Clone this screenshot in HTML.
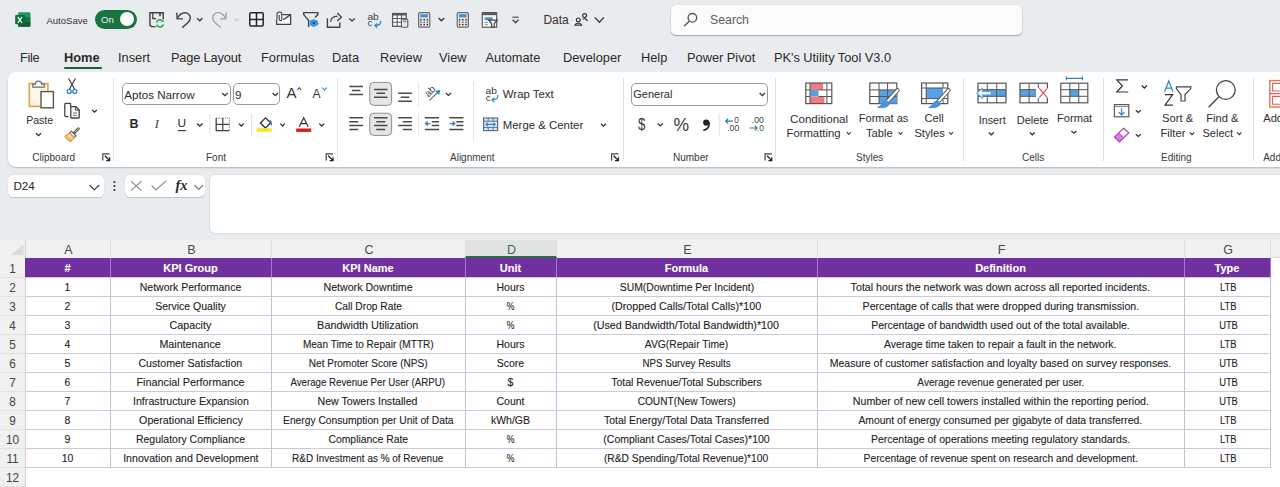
<!DOCTYPE html>
<html><head><meta charset="utf-8">
<style>
*{margin:0;padding:0;box-sizing:border-box}
html,body{width:1280px;height:487px;overflow:hidden;background:#e9ecef;font-family:"Liberation Sans", sans-serif;color:#242424;position:relative}
.a{position:absolute;white-space:nowrap}
svg{position:absolute;left:0;top:0}
.cell{font-size:10.5px;color:#222;text-align:center;overflow:hidden;-webkit-text-stroke:0.1px #222}
.hd{color:#fff;font-weight:bold;font-size:11px;-webkit-text-stroke:0.1px #fff}
.colh{top:240.5px;height:17px;line-height:18px;font-size:12.5px;text-align:center}
.rowh{left:-0.4px;width:25px;text-align:center;font-size:12.8px;color:#444;transform:scaleX(0.92)}
</style></head><body>
<div class="a" style="left:46.5px;top:15.71px;font-size:9.5px;line-height:9.5px;color:#333">AutoSave</div>
<div class="a" style="left:95px;top:10px;width:42px;height:19px;border-radius:10px;background:#19743f"></div>
<div class="a" style="left:101px;top:15.37px;font-size:9.6px;line-height:9.6px;color:#e6f4ea">On</div>
<div class="a" style="left:119.7px;top:12px;width:14.4px;height:14.4px;border-radius:50%;background:#fff"></div>
<div class="a" style="left:543.4px;top:14.34px;font-size:12px;line-height:12px;color:#303030">Data</div>
<div class="a" style="left:671px;top:4.5px;width:351px;height:30.5px;border-radius:5px;background:#fbfbfb;box-shadow:0 1px 1.5px rgba(0,0,0,.28),0 0 0 0.5px #dcdcdc"></div>
<div class="a" style="left:710px;top:14.09px;font-size:12.3px;line-height:12.3px;color:#5e5e5e">Search</div>
<div class="a" style="left:20px;top:52.16px;font-size:12.8px;line-height:12.8px;color:#2a2a2a;letter-spacing:-0.35px">File</div>
<div class="a" style="left:64px;top:52.16px;font-size:12.8px;line-height:12.8px;color:#2a2a2a;font-weight:bold;letter-spacing:0px">Home</div>
<div class="a" style="left:118px;top:52.16px;font-size:12.8px;line-height:12.8px;color:#2a2a2a;letter-spacing:0px">Insert</div>
<div class="a" style="left:170.9px;top:52.16px;font-size:12.8px;line-height:12.8px;color:#2a2a2a;letter-spacing:-0.15px">Page Layout</div>
<div class="a" style="left:261px;top:52.16px;font-size:12.8px;line-height:12.8px;color:#2a2a2a;letter-spacing:0px">Formulas</div>
<div class="a" style="left:332px;top:52.16px;font-size:12.8px;line-height:12.8px;color:#2a2a2a;letter-spacing:0px">Data</div>
<div class="a" style="left:380px;top:52.16px;font-size:12.8px;line-height:12.8px;color:#2a2a2a;letter-spacing:0px">Review</div>
<div class="a" style="left:439px;top:52.16px;font-size:12.8px;line-height:12.8px;color:#2a2a2a;letter-spacing:0px">View</div>
<div class="a" style="left:485.5px;top:52.16px;font-size:12.8px;line-height:12.8px;color:#2a2a2a;letter-spacing:0px">Automate</div>
<div class="a" style="left:563px;top:52.16px;font-size:12.8px;line-height:12.8px;color:#2a2a2a;letter-spacing:0px">Developer</div>
<div class="a" style="left:641px;top:52.16px;font-size:12.8px;line-height:12.8px;color:#2a2a2a;letter-spacing:0px">Help</div>
<div class="a" style="left:687px;top:52.16px;font-size:12.8px;line-height:12.8px;color:#2a2a2a;letter-spacing:0px">Power Pivot</div>
<div class="a" style="left:774px;top:52.16px;font-size:12.8px;line-height:12.8px;color:#2a2a2a;letter-spacing:-0.02px">PK's Utility Tool V3.0</div>
<div class="a" style="left:64.2px;top:66.8px;width:37.4px;height:2.6px;border-radius:1.3px;background:#1b6138"></div>
<div class="a" style="left:8px;top:72px;width:1290px;height:94.5px;background:#fff;border-radius:8px;box-shadow:0 1px 1.5px rgba(0,0,0,.22)"></div>
<div class="a" style="left:113px;top:78px;width:1px;height:83px;background:#e3e3e3"></div>
<div class="a" style="left:336.5px;top:78px;width:1px;height:83px;background:#e3e3e3"></div>
<div class="a" style="left:622.5px;top:78px;width:1px;height:83px;background:#e3e3e3"></div>
<div class="a" style="left:775.3px;top:78px;width:1px;height:83px;background:#e3e3e3"></div>
<div class="a" style="left:963px;top:78px;width:1px;height:83px;background:#e3e3e3"></div>
<div class="a" style="left:1102.5px;top:78px;width:1px;height:83px;background:#e3e3e3"></div>
<div class="a" style="left:1252.7px;top:78px;width:1px;height:83px;background:#e3e3e3"></div>
<div class="a" style="left:32.3px;top:152.73px;font-size:10px;line-height:10px;color:#3a3a3a">Clipboard</div>
<div class="a" style="left:206px;top:152.73px;font-size:10px;line-height:10px;color:#3a3a3a">Font</div>
<div class="a" style="left:450px;top:152.73px;font-size:10px;line-height:10px;color:#3a3a3a">Alignment</div>
<div class="a" style="left:673px;top:152.73px;font-size:10px;line-height:10px;color:#3a3a3a">Number</div>
<div class="a" style="left:856px;top:152.73px;font-size:10px;line-height:10px;color:#3a3a3a">Styles</div>
<div class="a" style="left:1022px;top:152.73px;font-size:10px;line-height:10px;color:#3a3a3a">Cells</div>
<div class="a" style="left:1161px;top:152.73px;font-size:10px;line-height:10px;color:#3a3a3a">Editing</div>
<div class="a" style="left:1263.2px;top:152.73px;font-size:10px;line-height:10px;color:#3a3a3a">Add-ins</div>
<div class="a" style="left:26.2px;top:115.11px;font-size:10.5px;line-height:10.5px;color:#2e2e2e">Paste</div>
<div class="a" style="left:121.5px;top:82.9px;width:109.2px;height:22.3px;border:1px solid #9a9a9a;border-radius:5px;background:#fff"></div>
<div class="a" style="left:124.3px;top:88.88px;font-size:11.6px;line-height:11.6px;color:#2b2b2b">Aptos Narrow</div>
<div class="a" style="left:232.5px;top:82.9px;width:47.8px;height:22.3px;border:1px solid #9a9a9a;border-radius:5px;background:#fff"></div>
<div class="a" style="left:235px;top:88.88px;font-size:11.6px;line-height:11.6px;color:#2b2b2b">9</div>
<div class="a" style="left:129.4px;top:117.62px;font-size:12.5px;line-height:12.5px;color:#2b2b2b;font-weight:bold">B</div>
<div class="a" style="left:154.8px;top:117.62px;font-size:12.5px;line-height:12.5px;color:#3a3a3a;font-style:italic;font-family:'Liberation Serif', serif">I</div>
<div class="a" style="left:177.6px;top:118.21px;font-size:11.8px;line-height:11.8px;color:#2b2b2b">U</div>
<div class="a" style="left:286.5px;top:85.30px;font-size:15px;line-height:15px;color:#333">A</div>
<div class="a" style="left:312.5px;top:87.84px;font-size:12px;line-height:12px;color:#333">A</div>
<div class="a" style="left:502.8px;top:89.05px;font-size:11.4px;line-height:11.4px;color:#2b2b2b">Wrap Text</div>
<div class="a" style="left:502.8px;top:119.65px;font-size:11.4px;line-height:11.4px;color:#2b2b2b">Merge &amp; Center</div>
<div class="a" style="left:631px;top:82.5px;width:137px;height:23px;border:1px solid #9a9a9a;border-radius:5px;background:#fff"></div>
<div class="a" style="left:633.3px;top:89.39px;font-size:11px;line-height:11px;color:#2b2b2b">General</div>
<div class="a" style="left:637.6px;top:116.01px;font-size:17px;line-height:17px;color:#3a3a3a;transform:scaleX(0.78);transform-origin:left">$</div>
<div class="a" style="left:673.5px;top:117.19px;font-size:17.5px;line-height:17.5px;color:#3a3a3a">%</div>
<div class="a" style="left:790.1px;top:113.18px;font-size:11.6px;line-height:11.6px;color:#2e2e2e">Conditional</div>
<div class="a" style="left:786.5px;top:127.53px;font-size:11.3px;line-height:11.3px;color:#2e2e2e">Formatting</div>
<div class="a" style="left:858.8px;top:113.29px;font-size:11px;line-height:11px;color:#2e2e2e">Format as</div>
<div class="a" style="left:866px;top:127.62px;font-size:11.2px;line-height:11.2px;color:#2e2e2e">Table</div>
<div class="a" style="left:924.5px;top:113.12px;font-size:11.2px;line-height:11.2px;color:#2e2e2e">Cell</div>
<div class="a" style="left:914.4px;top:127.62px;font-size:11.2px;line-height:11.2px;color:#2e2e2e">Styles</div>
<div class="a" style="left:978.7px;top:115.16px;font-size:10.8px;line-height:10.8px;color:#2e2e2e">Insert</div>
<div class="a" style="left:1016.7px;top:114.90px;font-size:11.1px;line-height:11.1px;color:#2e2e2e">Delete</div>
<div class="a" style="left:1057px;top:113.10px;font-size:11.1px;line-height:11.1px;color:#2e2e2e">Format</div>
<div class="a" style="left:1162px;top:112.72px;font-size:11.2px;line-height:11.2px;color:#2e2e2e">Sort &amp;</div>
<div class="a" style="left:1160.5px;top:127.72px;font-size:11.2px;line-height:11.2px;color:#2e2e2e">Filter</div>
<div class="a" style="left:1206.2px;top:112.72px;font-size:11.2px;line-height:11.2px;color:#2e2e2e">Find &amp;</div>
<div class="a" style="left:1202.5px;top:127.89px;font-size:11px;line-height:11px;color:#2e2e2e">Select</div>
<div class="a" style="left:1263.2px;top:112.72px;font-size:11.2px;line-height:11.2px;color:#2e2e2e">Add-ins</div>
<div class="a" style="left:7.7px;top:174.5px;width:96.3px;height:22px;background:#fff;border-radius:5px;box-shadow:0 0.5px 1px rgba(0,0,0,.18)"></div>
<div class="a" style="left:13.4px;top:180.40px;font-size:11.7px;line-height:11.7px;color:#262626">D24</div>
<div class="a" style="left:124.6px;top:174.5px;width:80.4px;height:22px;background:#fff;border-radius:5px;box-shadow:0 0.5px 1px rgba(0,0,0,.18)"></div>
<div class="a" style="left:210px;top:174.5px;width:1090px;height:58.8px;background:#fff;border-radius:5px;box-shadow:0 0 0 0.6px rgba(0,0,0,.1)"></div>
<div class="a" style="left:175.5px;top:178.23px;font-size:14.5px;line-height:14.5px;color:#2a2a2a;font-weight:bold;font-style:italic;font-family:'Liberation Serif', serif">fx</div>
<div class="a" style="left:0px;top:240px;width:1280px;height:247px;background:#fff"></div>
<div class="a" style="left:0px;top:240px;width:1280px;height:18px;background:#f0f0f0"></div>
<div class="a" style="left:25px;top:257px;width:1245px;height:1px;background:#f3ecf9"></div>
<div class="a" style="left:1270px;top:257px;width:10px;height:1px;background:#d8d8d8"></div>
<div class="a" style="left:0px;top:240px;width:25px;height:247px;background:#f0f0f0"></div>
<div class="a" style="left:466px;top:240px;width:90px;height:17px;background:#e1e3e3"></div>
<div class="a" style="left:465px;top:256px;width:92px;height:2px;background:#2f6b4a"></div>
<div class="a" style="left:110px;top:240px;width:1px;height:17px;background:#dedede"></div>
<div class="a" style="left:271px;top:240px;width:1px;height:17px;background:#dedede"></div>
<div class="a" style="left:465px;top:240px;width:1px;height:17px;background:#dedede"></div>
<div class="a" style="left:556px;top:240px;width:1px;height:17px;background:#dedede"></div>
<div class="a" style="left:817px;top:240px;width:1px;height:17px;background:#dedede"></div>
<div class="a" style="left:1184px;top:240px;width:1px;height:17px;background:#dedede"></div>
<div class="a" style="left:1270px;top:240px;width:1px;height:17px;background:#dedede"></div>
<div class="a" style="left:25px;top:240px;width:1px;height:247px;background:#d2d2d2"></div>
<div class="a colh" style="left:26px;width:85px;color:#4a4a4a">A</div>
<div class="a colh" style="left:111px;width:161px;color:#4a4a4a">B</div>
<div class="a colh" style="left:272px;width:194px;color:#4a4a4a">C</div>
<div class="a colh" style="left:466px;width:91px;color:#3d6a4e">D</div>
<div class="a colh" style="left:557px;width:261px;color:#4a4a4a">E</div>
<div class="a colh" style="left:818px;width:367px;color:#4a4a4a">F</div>
<div class="a colh" style="left:1185px;width:86px;color:#4a4a4a">G</div>
<div class="a rowh" style="top:259px;height:19px;line-height:19px">1</div>
<div class="a" style="left:0px;top:277px;width:25px;height:1px;background:#e2e2e2"></div>
<div class="a rowh" style="top:279px;height:18px;line-height:18px">2</div>
<div class="a" style="left:0px;top:296px;width:25px;height:1px;background:#e2e2e2"></div>
<div class="a rowh" style="top:298px;height:18px;line-height:18px">3</div>
<div class="a" style="left:0px;top:315px;width:25px;height:1px;background:#e2e2e2"></div>
<div class="a rowh" style="top:317px;height:18px;line-height:18px">4</div>
<div class="a" style="left:0px;top:334px;width:25px;height:1px;background:#e2e2e2"></div>
<div class="a rowh" style="top:336px;height:18px;line-height:18px">5</div>
<div class="a" style="left:0px;top:353px;width:25px;height:1px;background:#e2e2e2"></div>
<div class="a rowh" style="top:355px;height:18px;line-height:18px">6</div>
<div class="a" style="left:0px;top:372px;width:25px;height:1px;background:#e2e2e2"></div>
<div class="a rowh" style="top:374px;height:18px;line-height:18px">7</div>
<div class="a" style="left:0px;top:391px;width:25px;height:1px;background:#e2e2e2"></div>
<div class="a rowh" style="top:393px;height:18px;line-height:18px">8</div>
<div class="a" style="left:0px;top:410px;width:25px;height:1px;background:#e2e2e2"></div>
<div class="a rowh" style="top:412px;height:18px;line-height:18px">9</div>
<div class="a" style="left:0px;top:429px;width:25px;height:1px;background:#e2e2e2"></div>
<div class="a rowh" style="top:431px;height:18px;line-height:18px">10</div>
<div class="a" style="left:0px;top:448px;width:25px;height:1px;background:#e2e2e2"></div>
<div class="a rowh" style="top:450px;height:18px;line-height:18px">11</div>
<div class="a" style="left:0px;top:467px;width:25px;height:1px;background:#e2e2e2"></div>
<div class="a rowh" style="top:469px;height:18px;line-height:18px">12</div>
<div class="a" style="left:0px;top:486px;width:25px;height:1px;background:#e2e2e2"></div>
<div class="a" style="left:25px;top:258px;width:1245px;height:19px;background:#7030a0"></div>
<div class="a" style="left:25px;top:277px;width:1246px;height:1px;background:#ccc9da"></div>
<div class="a" style="left:25px;top:296px;width:1246px;height:1px;background:#ccc9da"></div>
<div class="a" style="left:25px;top:315px;width:1246px;height:1px;background:#ccc9da"></div>
<div class="a" style="left:25px;top:334px;width:1246px;height:1px;background:#ccc9da"></div>
<div class="a" style="left:25px;top:353px;width:1246px;height:1px;background:#ccc9da"></div>
<div class="a" style="left:25px;top:372px;width:1246px;height:1px;background:#ccc9da"></div>
<div class="a" style="left:25px;top:391px;width:1246px;height:1px;background:#ccc9da"></div>
<div class="a" style="left:25px;top:410px;width:1246px;height:1px;background:#ccc9da"></div>
<div class="a" style="left:25px;top:429px;width:1246px;height:1px;background:#ccc9da"></div>
<div class="a" style="left:25px;top:448px;width:1246px;height:1px;background:#ccc9da"></div>
<div class="a" style="left:25px;top:467px;width:1246px;height:1px;background:#ccc9da"></div>
<div class="a" style="left:110px;top:258px;width:1px;height:19px;background:#a57ad6"></div>
<div class="a" style="left:110px;top:277px;width:1px;height:191px;background:#c4c0d9"></div>
<div class="a" style="left:271px;top:258px;width:1px;height:19px;background:#a57ad6"></div>
<div class="a" style="left:271px;top:277px;width:1px;height:191px;background:#c4c0d9"></div>
<div class="a" style="left:465px;top:258px;width:1px;height:19px;background:#a57ad6"></div>
<div class="a" style="left:465px;top:277px;width:1px;height:191px;background:#c4c0d9"></div>
<div class="a" style="left:556px;top:258px;width:1px;height:19px;background:#a57ad6"></div>
<div class="a" style="left:556px;top:277px;width:1px;height:191px;background:#c4c0d9"></div>
<div class="a" style="left:817px;top:258px;width:1px;height:19px;background:#a57ad6"></div>
<div class="a" style="left:817px;top:277px;width:1px;height:191px;background:#c4c0d9"></div>
<div class="a" style="left:1184px;top:258px;width:1px;height:19px;background:#a57ad6"></div>
<div class="a" style="left:1184px;top:277px;width:1px;height:191px;background:#c4c0d9"></div>
<div class="a" style="left:1270px;top:258px;width:1px;height:19px;background:#a57ad6"></div>
<div class="a" style="left:1270px;top:277px;width:1px;height:191px;background:#c4c0d9"></div>
<div class="a cell hd" style="left:25px;top:258.7px;width:85px;height:19px;line-height:19px">#</div>
<div class="a cell hd" style="left:110px;top:258.7px;width:161px;height:19px;line-height:19px">KPI Group</div>
<div class="a cell hd" style="left:271px;top:258.7px;width:194px;height:19px;line-height:19px">KPI Name</div>
<div class="a cell hd" style="left:465px;top:258.7px;width:91px;height:19px;line-height:19px">Unit</div>
<div class="a cell hd" style="left:556px;top:258.7px;width:261px;height:19px;line-height:19px">Formula</div>
<div class="a cell hd" style="left:817px;top:258.7px;width:367px;height:19px;line-height:19px">Definition</div>
<div class="a cell hd" style="left:1184px;top:258.7px;width:86px;height:19px;line-height:19px">Type</div>
<div class="a cell" style="left:25px;top:277.5px;width:85px;height:18px;line-height:18px">1</div>
<div class="a cell" style="left:110px;top:277.5px;width:161px;height:18px;line-height:18px">Network Performance</div>
<div class="a cell" style="left:271px;top:277.5px;width:194px;height:18px;line-height:18px"><span style="display:inline-block;transform:scaleX(1.0113)">Network Downtime</span></div>
<div class="a cell" style="left:465px;top:277.5px;width:91px;height:18px;line-height:18px">Hours</div>
<div class="a cell" style="left:556px;top:277.5px;width:261px;height:18px;line-height:18px"><span style="display:inline-block;transform:scaleX(0.9884)">SUM(Downtime Per Incident)</span></div>
<div class="a cell" style="left:817px;top:277.5px;width:367px;height:18px;line-height:18px"><span style="display:inline-block;transform:scaleX(1.0162)">Total hours the network was down across all reported incidents.</span></div>
<div class="a cell" style="left:1185px;top:277.5px;width:86px;height:18px;line-height:18px"><span style="display:inline-block;transform:scaleX(0.89)">LTB</span></div>
<div class="a cell" style="left:25px;top:296.5px;width:85px;height:18px;line-height:18px">2</div>
<div class="a cell" style="left:110px;top:296.5px;width:161px;height:18px;line-height:18px">Service Quality</div>
<div class="a cell" style="left:271px;top:296.5px;width:194px;height:18px;line-height:18px"><span style="display:inline-block;transform:scaleX(0.9739)">Call Drop Rate</span></div>
<div class="a cell" style="left:465px;top:296.5px;width:91px;height:18px;line-height:18px"><span style="display:inline-block;transform:scaleX(0.82)">%</span></div>
<div class="a cell" style="left:556px;top:296.5px;width:261px;height:18px;line-height:18px"><span style="display:inline-block;transform:scaleX(1.0221)">(Dropped Calls/Total Calls)*100</span></div>
<div class="a cell" style="left:817px;top:296.5px;width:367px;height:18px;line-height:18px"><span style="display:inline-block;transform:scaleX(1.0105)">Percentage of calls that were dropped during transmission.</span></div>
<div class="a cell" style="left:1185px;top:296.5px;width:86px;height:18px;line-height:18px"><span style="display:inline-block;transform:scaleX(0.89)">LTB</span></div>
<div class="a cell" style="left:25px;top:315.5px;width:85px;height:18px;line-height:18px">3</div>
<div class="a cell" style="left:110px;top:315.5px;width:161px;height:18px;line-height:18px"><span style="display:inline-block;transform:scaleX(1.0235)">Capacity</span></div>
<div class="a cell" style="left:271px;top:315.5px;width:194px;height:18px;line-height:18px"><span style="display:inline-block;transform:scaleX(1.0386)">Bandwidth Utilization</span></div>
<div class="a cell" style="left:465px;top:315.5px;width:91px;height:18px;line-height:18px"><span style="display:inline-block;transform:scaleX(0.82)">%</span></div>
<div class="a cell" style="left:556px;top:315.5px;width:261px;height:18px;line-height:18px"><span style="display:inline-block;transform:scaleX(1.0204)">(Used Bandwidth/Total Bandwidth)*100</span></div>
<div class="a cell" style="left:817px;top:315.5px;width:367px;height:18px;line-height:18px">Percentage of bandwidth used out of the total available.</div>
<div class="a cell" style="left:1185px;top:315.5px;width:86px;height:18px;line-height:18px"><span style="display:inline-block;transform:scaleX(0.89)">UTB</span></div>
<div class="a cell" style="left:25px;top:334.5px;width:85px;height:18px;line-height:18px">4</div>
<div class="a cell" style="left:110px;top:334.5px;width:161px;height:18px;line-height:18px"><span style="display:inline-block;transform:scaleX(1.0198)">Maintenance</span></div>
<div class="a cell" style="left:271px;top:334.5px;width:194px;height:18px;line-height:18px"><span style="display:inline-block;transform:scaleX(0.9578)">Mean Time to Repair (MTTR)</span></div>
<div class="a cell" style="left:465px;top:334.5px;width:91px;height:18px;line-height:18px">Hours</div>
<div class="a cell" style="left:556px;top:334.5px;width:261px;height:18px;line-height:18px"><span style="display:inline-block;transform:scaleX(0.981)">AVG(Repair Time)</span></div>
<div class="a cell" style="left:817px;top:334.5px;width:367px;height:18px;line-height:18px"><span style="display:inline-block;transform:scaleX(0.9917)">Average time taken to repair a fault in the network.</span></div>
<div class="a cell" style="left:1185px;top:334.5px;width:86px;height:18px;line-height:18px"><span style="display:inline-block;transform:scaleX(0.89)">LTB</span></div>
<div class="a cell" style="left:25px;top:353.5px;width:85px;height:18px;line-height:18px">5</div>
<div class="a cell" style="left:110px;top:353.5px;width:161px;height:18px;line-height:18px"><span style="display:inline-block;transform:scaleX(1.0106)">Customer Satisfaction</span></div>
<div class="a cell" style="left:271px;top:353.5px;width:194px;height:18px;line-height:18px"><span style="display:inline-block;transform:scaleX(0.9547)">Net Promoter Score (NPS)</span></div>
<div class="a cell" style="left:465px;top:353.5px;width:91px;height:18px;line-height:18px">Score</div>
<div class="a cell" style="left:556px;top:353.5px;width:261px;height:18px;line-height:18px"><span style="display:inline-block;transform:scaleX(0.9255)">NPS Survey Results</span></div>
<div class="a cell" style="left:817px;top:353.5px;width:367px;height:18px;line-height:18px">Measure of customer satisfaction and loyalty based on survey responses.</div>
<div class="a cell" style="left:1185px;top:353.5px;width:86px;height:18px;line-height:18px"><span style="display:inline-block;transform:scaleX(0.89)">UTB</span></div>
<div class="a cell" style="left:25px;top:372.5px;width:85px;height:18px;line-height:18px">6</div>
<div class="a cell" style="left:110px;top:372.5px;width:161px;height:18px;line-height:18px"><span style="display:inline-block;transform:scaleX(1.0302)">Financial Performance</span></div>
<div class="a cell" style="left:271px;top:372.5px;width:194px;height:18px;line-height:18px"><span style="display:inline-block;transform:scaleX(0.9237)">Average Revenue Per User (ARPU)</span></div>
<div class="a cell" style="left:465px;top:372.5px;width:91px;height:18px;line-height:18px">$</div>
<div class="a cell" style="left:556px;top:372.5px;width:261px;height:18px;line-height:18px">Total Revenue/Total Subscribers</div>
<div class="a cell" style="left:817px;top:372.5px;width:367px;height:18px;line-height:18px"><span style="display:inline-block;transform:scaleX(0.9615)">Average revenue generated per user.</span></div>
<div class="a cell" style="left:1185px;top:372.5px;width:86px;height:18px;line-height:18px"><span style="display:inline-block;transform:scaleX(0.89)">UTB</span></div>
<div class="a cell" style="left:25px;top:391.5px;width:85px;height:18px;line-height:18px">7</div>
<div class="a cell" style="left:110px;top:391.5px;width:161px;height:18px;line-height:18px"><span style="display:inline-block;transform:scaleX(1.0185)">Infrastructure Expansion</span></div>
<div class="a cell" style="left:271px;top:391.5px;width:194px;height:18px;line-height:18px"><span style="display:inline-block;transform:scaleX(1.0099)">New Towers Installed</span></div>
<div class="a cell" style="left:465px;top:391.5px;width:91px;height:18px;line-height:18px">Count</div>
<div class="a cell" style="left:556px;top:391.5px;width:261px;height:18px;line-height:18px"><span style="display:inline-block;transform:scaleX(0.9679)">COUNT(New Towers)</span></div>
<div class="a cell" style="left:817px;top:391.5px;width:367px;height:18px;line-height:18px"><span style="display:inline-block;transform:scaleX(1.0147)">Number of new cell towers installed within the reporting period.</span></div>
<div class="a cell" style="left:1185px;top:391.5px;width:86px;height:18px;line-height:18px"><span style="display:inline-block;transform:scaleX(0.89)">UTB</span></div>
<div class="a cell" style="left:25px;top:410.5px;width:85px;height:18px;line-height:18px">8</div>
<div class="a cell" style="left:110px;top:410.5px;width:161px;height:18px;line-height:18px"><span style="display:inline-block;transform:scaleX(1.0173)">Operational Efficiency</span></div>
<div class="a cell" style="left:271px;top:410.5px;width:194px;height:18px;line-height:18px"><span style="display:inline-block;transform:scaleX(0.9763)">Energy Consumption per Unit of Data</span></div>
<div class="a cell" style="left:465px;top:410.5px;width:91px;height:18px;line-height:18px">kWh/GB</div>
<div class="a cell" style="left:556px;top:410.5px;width:261px;height:18px;line-height:18px">Total Energy/Total Data Transferred</div>
<div class="a cell" style="left:817px;top:410.5px;width:367px;height:18px;line-height:18px"><span style="display:inline-block;transform:scaleX(0.9902)">Amount of energy consumed per gigabyte of data transferred.</span></div>
<div class="a cell" style="left:1185px;top:410.5px;width:86px;height:18px;line-height:18px"><span style="display:inline-block;transform:scaleX(0.89)">LTB</span></div>
<div class="a cell" style="left:25px;top:429.5px;width:85px;height:18px;line-height:18px">9</div>
<div class="a cell" style="left:110px;top:429.5px;width:161px;height:18px;line-height:18px">Regulatory Compliance</div>
<div class="a cell" style="left:271px;top:429.5px;width:194px;height:18px;line-height:18px"><span style="display:inline-block;transform:scaleX(0.9894)">Compliance Rate</span></div>
<div class="a cell" style="left:465px;top:429.5px;width:91px;height:18px;line-height:18px"><span style="display:inline-block;transform:scaleX(0.82)">%</span></div>
<div class="a cell" style="left:556px;top:429.5px;width:261px;height:18px;line-height:18px">(Compliant Cases/Total Cases)*100</div>
<div class="a cell" style="left:817px;top:429.5px;width:367px;height:18px;line-height:18px">Percentage of operations meeting regulatory standards.</div>
<div class="a cell" style="left:1185px;top:429.5px;width:86px;height:18px;line-height:18px"><span style="display:inline-block;transform:scaleX(0.89)">LTB</span></div>
<div class="a cell" style="left:25px;top:448.5px;width:85px;height:18px;line-height:18px">10</div>
<div class="a cell" style="left:110px;top:448.5px;width:161px;height:18px;line-height:18px"><span style="display:inline-block;transform:scaleX(1.0129)">Innovation and Development</span></div>
<div class="a cell" style="left:271px;top:448.5px;width:194px;height:18px;line-height:18px"><span style="display:inline-block;transform:scaleX(0.9487)">R&amp;D Investment as % of Revenue</span></div>
<div class="a cell" style="left:465px;top:448.5px;width:91px;height:18px;line-height:18px"><span style="display:inline-block;transform:scaleX(0.82)">%</span></div>
<div class="a cell" style="left:556px;top:448.5px;width:261px;height:18px;line-height:18px"><span style="display:inline-block;transform:scaleX(0.9772)">(R&amp;D Spending/Total Revenue)*100</span></div>
<div class="a cell" style="left:817px;top:448.5px;width:367px;height:18px;line-height:18px"><span style="display:inline-block;transform:scaleX(0.982)">Percentage of revenue spent on research and development.</span></div>
<div class="a cell" style="left:1185px;top:448.5px;width:86px;height:18px;line-height:18px"><span style="display:inline-block;transform:scaleX(0.89)">LTB</span></div>
<svg width="1280" height="487" viewBox="0 0 1280 487"><rect x="18.1" y="12.2" width="12.3" height="14.5" rx="1.2" fill="#1d9a5e"/><rect x="18.1" y="17" width="12.3" height="4.8" fill="#127a44"/><path d="M18.1,21.8 H30.4 V25.5 A1.2,1.2 0 0 1 29.2,26.7 H19.3 A1.2,1.2 0 0 1 18.1,25.5 Z" fill="#175c36"/><rect x="15.2" y="14.9" width="9.6" height="9.4" rx="0.9" fill="#0f6b39"/><path d="M17.7,17 L22,22.8 M22,17 L17.7,22.8" stroke="#d4f5e0" stroke-width="1.3"/><path d="M155.5,26.6 H151.4 L149.9,25.1 V12.8 H163.2 V19.2" fill="none" stroke="#424242" stroke-width="1.4"/><path d="M152.8,12.8 V18.6 H156.2" fill="none" stroke="#424242" stroke-width="1.3"/><path d="M160,12.8 V16.3" fill="none" stroke="#424242" stroke-width="1.6"/><path d="M156.6,22.6 A3.4,3.4 0 0 1 162.8,21.2" fill="none" stroke="#2f9e58" stroke-width="1.5"/><path d="M163.3,24.3 A3.4,3.4 0 0 1 157.2,25.6" fill="none" stroke="#2f9e58" stroke-width="1.5"/><path d="M163.6,19.6 V22 H161.2 Z M156.3,27.2 V24.8 H158.7 Z" fill="#2f9e58"/><path d="M177.3,18.6 C179.5,14.2 182.5,12.7 184.8,12.7 C188,12.7 190.3,15.2 190.3,17.8 C190.3,19.8 189.4,21.2 187.8,22.8 L182.3,27.6" fill="none" stroke="#424242" stroke-width="1.4"/><path d="M176.8,12.6 L177.2,18.9 L183,18.9" fill="none" stroke="#424242" stroke-width="1.4"/><path d="M197.2,18.2 L199.8,20.8 L202.4,18.2" fill="none" stroke="#333" stroke-width="1.3"/><path d="M225.7,18.6 C223.5,14.2 220.5,12.7 218.2,12.7 C215,12.7 212.7,15.2 212.7,17.8 C212.7,19.8 213.6,21.2 215.2,22.8 L220.7,27.6" fill="none" stroke="#9e9e9e" stroke-width="1.3"/><path d="M226.2,12.6 L225.8,18.9 L220,18.9" fill="none" stroke="#9e9e9e" stroke-width="1.3"/><path d="M234.2,18.8 L236.5,20.8 L238.8,18.8" fill="none" stroke="#b0b0b0" stroke-width="1"/><rect x="249.8" y="12.8" width="13.4" height="13.2" rx="1" fill="#fff" fill-opacity=".4" stroke="#262626" stroke-width="1.5"/><path d="M256.5,12.8 V26 M249.8,19.4 H263.2" stroke="#262626" stroke-width="1.5"/><path d="M282.4,14.6 H290.6 V24.4 H276.7 V19.6" fill="#fbfbfb" stroke="#424242" stroke-width="1.3"/><path d="M283.2,19.8 L290.2,14.9" fill="none" stroke="#424242" stroke-width="1.3"/><path d="M277,19.6 V14.4 A2.4,2.4 0 0 1 281.8,14.4 V19.2 A1.3,1.3 0 0 1 279.2,19.2 V15" fill="none" stroke="#424242" stroke-width="1.1"/><path d="M308.6,27 V20.2 L303.7,14.6 V12.6 H317.8 V14.6 L315,17.6" fill="none" stroke="#424242" stroke-width="1.4"/><path d="M313.75,18.9 L315.8,20.1 L317.8,20.6 L317.8,22.9 L319,23 L317.8,25.3 L315.8,25.9 L313.75,27.1 L311.7,25.9 L309.7,25.3 L309.7,20.6 L311.7,20.1 Z" fill="#3a96e0" transform="translate(0,0)"/><circle cx="313.75" cy="23" r="3.2" fill="#3a96e0"/><circle cx="313.75" cy="23" r="1.2" fill="#1a4f80"/><path d="M327.4,18.2 V27.2 H339.8 V22.4" fill="none" stroke="#424242" stroke-width="1.4"/><path d="M330.6,21.6 C331,18 333.6,16.4 337.6,16.2" fill="none" stroke="#424242" stroke-width="1.3"/><path d="M337.4,13 L341.4,17.2 L337.4,21" fill="none" stroke="#424242" stroke-width="1.3"/><path d="M349.3,18.6 L352.05,21 L354.8,18.6" fill="none" stroke="#333" stroke-width="1.3"/><text x="367.4" y="19.6" font-family="Liberation Sans" font-size="9.8" fill="#424242" textLength="11.4" lengthAdjust="spacingAndGlyphs">ab</text><text x="367.6" y="26.4" font-family="Liberation Sans" font-size="9.8" fill="#424242">c</text><path d="M380.4,20.8 C381.4,24 379.2,25.6 375,25.6" fill="none" stroke="#2b8ce0" stroke-width="1.4"/><path d="M377.2,23.4 L374.8,25.6 L377.2,27.8" fill="none" stroke="#2b8ce0" stroke-width="1.3"/><rect x="392.6" y="13.5" width="13.6" height="12.8" fill="#fff" stroke="#585858" stroke-width="1.3"/><rect x="392.6" y="13.5" width="13.6" height="2" fill="#585858"/><path d="M392.6,18.5 H406 M392.6,22.2 H401 M397.2,13.5 V26.3 M401.6,13.5 V19" stroke="#585858" stroke-width="1.1"/><rect x="401.4" y="19.2" width="6.4" height="8" rx="0.8" fill="#e9e9e9" stroke="#585858" stroke-width="1.1"/><rect x="402.8" y="20.6" width="3.6" height="1.6" fill="#4f95d8"/><rect x="418.6" y="12.6" width="11.2" height="14.6" rx="1.3" fill="#e3e6ea" stroke="#6a6a6a" stroke-width="1.2"/><rect x="420.3" y="14.2" width="7.8" height="3.2" fill="#4a90d9"/><rect x="420.3" y="19.1" width="1.4" height="1.4" fill="#222"/><rect x="423.5" y="19.1" width="1.4" height="1.4" fill="#222"/><rect x="426.7" y="19.1" width="1.4" height="1.4" fill="#222"/><rect x="420.3" y="21.5" width="1.4" height="1.4" fill="#8a5a3a"/><rect x="423.5" y="21.5" width="1.4" height="1.4" fill="#8a5a3a"/><rect x="426.7" y="21.5" width="1.4" height="1.4" fill="#8a5a3a"/><rect x="420.3" y="23.900000000000002" width="1.4" height="1.4" fill="#222"/><rect x="423.5" y="23.900000000000002" width="1.4" height="1.4" fill="#222"/><rect x="426.7" y="23.900000000000002" width="1.4" height="1.4" fill="#222"/><rect x="457.2" y="12.6" width="11.2" height="14.6" rx="1.3" fill="#e3e6ea" stroke="#6a6a6a" stroke-width="1.2"/><rect x="458.9" y="14.2" width="7.8" height="3.2" fill="#4a90d9"/><rect x="458.9" y="19.1" width="1.4" height="1.4" fill="#222"/><rect x="462.1" y="19.1" width="1.4" height="1.4" fill="#222"/><rect x="465.3" y="19.1" width="1.4" height="1.4" fill="#222"/><rect x="458.9" y="21.5" width="1.4" height="1.4" fill="#8a5a3a"/><rect x="462.1" y="21.5" width="1.4" height="1.4" fill="#8a5a3a"/><rect x="465.3" y="21.5" width="1.4" height="1.4" fill="#8a5a3a"/><rect x="458.9" y="23.900000000000002" width="1.4" height="1.4" fill="#222"/><rect x="462.1" y="23.900000000000002" width="1.4" height="1.4" fill="#222"/><rect x="465.3" y="23.900000000000002" width="1.4" height="1.4" fill="#222"/><path d="M438.6,18 L441.4,20.8 L444.2,18" fill="none" stroke="#333" stroke-width="1.3"/><rect x="482.3" y="12.6" width="14.4" height="14.6" fill="#fff" stroke="#5a5a5a" stroke-width="1.2"/><rect x="482.3" y="12.6" width="14.4" height="2.6" fill="#5a5a5a"/><rect x="484.6" y="17.2" width="8" height="3.2" fill="#4f95d8"/><path d="M484.5,22.6 H488 M484.5,24.8 H488" stroke="#888" stroke-width="1"/><path d="M488.6,20.2 H497.2 L494.2,23.6 V27.2 H491.6 V23.6 Z" fill="#fff" stroke="#444" stroke-width="1.2"/><path d="M512.4,17.2 H518.6" stroke="#555" stroke-width="1.2"/><path d="M512.6,19.8 L515.6,22.8 L518.6,19.8" fill="none" stroke="#444" stroke-width="1.3"/><circle cx="578.3" cy="19.9" r="1.9" fill="none" stroke="#333" stroke-width="1.2"/><path d="M575,25.2 C575.2,22.6 581.4,22.6 581.6,25.2 Z" fill="none" stroke="#333" stroke-width="1.2"/><circle cx="584.6" cy="15.6" r="1.9" fill="none" stroke="#333" stroke-width="1.2"/><path d="M582.6,19.2 C583.8,18.4 586.8,18.6 587.4,21" fill="none" stroke="#333" stroke-width="1.2"/><path d="M594.8,17.4 L599.4,22.2 L604,17.4" fill="none" stroke="#333" stroke-width="1.3"/><circle cx="692.4" cy="17.8" r="4.3" fill="none" stroke="#555" stroke-width="1.3"/><path d="M689.2,21.2 L684.2,26.3" stroke="#555" stroke-width="1.4"/><rect x="29.3" y="83.6" width="18.6" height="22.8" fill="#fdf5e8"/><path d="M40.6,106.4 H29.3 V83.6 H47.9 V91.2" fill="none" stroke="#e2a349" stroke-width="1.6"/><path d="M32.8,87.2 V84.2 H35.4 A3,3 0 0 1 41.6,84.2 H44.2 V87.2 Z" fill="#fff" stroke="#6a6a6a" stroke-width="1.2"/><rect x="41" y="91.6" width="12.4" height="16.2" fill="#fff" stroke="#555" stroke-width="1.4"/><path d="M36,133.2 L38.5,135.6 L41,133.2" fill="none" stroke="#333" stroke-width="1.3"/><path d="M68.6,78.6 L74.6,89.2 M75.4,78.6 L69.4,89.2" stroke="#333" stroke-width="1.1"/><circle cx="69.2" cy="91.4" r="2" fill="none" stroke="#2e86d4" stroke-width="1.3"/><circle cx="74.8" cy="91.4" r="2" fill="none" stroke="#2e86d4" stroke-width="1.3"/><path d="M68.4,116.6 H65.6 A0.8,0.8 0 0 1 64.8,115.8 V104.2 A0.8,0.8 0 0 1 65.6,103.4 H69.8 A0.8,0.8 0 0 1 70.6,104.2 V106.4" fill="none" stroke="#444" stroke-width="1.3"/><path d="M70.8,106.6 H75.8 L79.2,110 V117.3 A0.7,0.7 0 0 1 78.5,118 H71.5 A0.7,0.7 0 0 1 70.8,117.3 Z" fill="#fff" stroke="#444" stroke-width="1.3"/><path d="M75.6,106.6 V110.2 H79.2" fill="none" stroke="#444" stroke-width="1"/><path d="M73,113 H77 M73,115.4 H77" stroke="#777" stroke-width="1"/><path d="M92.2,110 L94.5,112.2 L96.8,110" fill="none" stroke="#333" stroke-width="1.3"/><path d="M78.4,128.8 L74.4,132.8" stroke="#5a5a5a" stroke-width="2.8" stroke-linecap="round"/><path d="M78.4,128.8 L75.2,132" stroke="#cfd8e0" stroke-width="1" stroke-linecap="round"/><path d="M71.4,131.2 L76,135.8 L74.2,137.6 L69.6,133 Z" fill="#fff" stroke="#555" stroke-width="1.1"/><path d="M69.6,133 L74.2,137.6 L70.6,141.4 C68.6,140.4 66.2,138.2 65,136.4 Z" fill="#fbd3a0" stroke="#e39a45" stroke-width="1.2"/><path d="M67.6,137.2 L71,140.2" stroke="#e39a45" stroke-width="0.8"/><path d="M102.8,160.6 V153.8 H109.60000000000001" fill="none" stroke="#444" stroke-width="1.2"/><path d="M104.8,155.8 L109.4,160.4 M109.60000000000001,157.2 V160.6 H106.2" fill="none" stroke="#222" stroke-width="1.3"/><path d="M326.20000000000005,160.6 V153.8 H333.0" fill="none" stroke="#444" stroke-width="1.2"/><path d="M328.20000000000005,155.8 L332.8,160.4 M333.0,157.2 V160.6 H329.6" fill="none" stroke="#222" stroke-width="1.3"/><path d="M611.6,160.6 V153.8 H618.4" fill="none" stroke="#444" stroke-width="1.2"/><path d="M613.6,155.8 L618.2,160.4 M618.4,157.2 V160.6 H615" fill="none" stroke="#222" stroke-width="1.3"/><path d="M765.0,160.6 V153.8 H771.8" fill="none" stroke="#444" stroke-width="1.2"/><path d="M767.0,155.8 L771.6,160.4 M771.8,157.2 V160.6 H768.4" fill="none" stroke="#222" stroke-width="1.3"/><path d="M222.2,93 L224.89999999999998,95.6 L227.6,93" fill="none" stroke="#333" stroke-width="1.3"/><path d="M272.6,93 L275.3,95.6 L278,93" fill="none" stroke="#333" stroke-width="1.3"/><path d="M297.4,90 L299.29999999999995,87.6 L301.2,90" fill="none" stroke="#555" stroke-width="1.1"/><path d="M322.4,87.6 L324.5,90 L326.6,87.6" fill="none" stroke="#2e86d4" stroke-width="1.1"/><path d="M177.8,130.6 H186" stroke="#333" stroke-width="1.1"/><path d="M197,123.4 L199.8,126 L202.6,123.4" fill="none" stroke="#333" stroke-width="1.3"/><path d="M209.9,114 V135.3 M251.6,114 V135.3" stroke="#e3e3e3" stroke-width="1"/><rect x="216.2" y="118" width="13.2" height="12.6" fill="none" stroke="#777" stroke-width="1" stroke-dasharray="1.1,1.1"/><path d="M216.2,118 V130.6 H229.4 M222.8,118 V130.6 M216.2,124.3 H229.4" fill="none" stroke="#444" stroke-width="1.2"/><path d="M238.8,123.6 L241.3,126 L243.8,123.6" fill="none" stroke="#333" stroke-width="1.3"/><path d="M260.4,123 L265.6,117.8 L270.6,122.8 L265.4,128 Z" fill="#fff" stroke="#333" stroke-width="1.3"/><path d="M269.6,120.4 C271.4,121.6 271.6,123.6 271.2,125.4" fill="none" stroke="#2e86d4" stroke-width="1.4"/><rect x="256.6" y="128.3" width="15.1" height="3.5" fill="#f5e52a"/><path d="M280.4,123.6 L282.6,126 L284.8,123.6" fill="none" stroke="#333" stroke-width="1.3"/><path d="M299.2,126.8 L303.7,117.8 L308.2,126.8 M300.8,123.6 H306.6" fill="none" stroke="#333" stroke-width="1.2"/><rect x="296.2" y="128.5" width="15" height="3.4" fill="#e01a1a"/><path d="M319.2,123.6 L321.7,126 L324.2,123.6" fill="none" stroke="#333" stroke-width="1.3"/><path d="M349.3,86.6 H363.0 M351.90000000000003,90.5 H360.40000000000003 M349.3,94.4 H363.0" stroke="#4a4a4a" stroke-width="1.5"/><rect x="369.8" y="82.4" width="21.8" height="23" rx="4" fill="#e6e6e6" stroke="#8c8c8c" stroke-width="1"/><path d="M374,89.4 H387.5 M376.4,93.3 H385.1 M374,97.3 H387.5" stroke="#4a4a4a" stroke-width="1.5"/><path d="M398.2,93.3 H411.9 M400.8,97.3 H409.3 M398.2,101.3 H411.9" stroke="#4a4a4a" stroke-width="1.5"/><path d="M418.4,82 V106 M418.4,113.4 V136 M473.6,82 V141" stroke="#e3e3e3" stroke-width="1"/><text x="0" y="0" font-family="Liberation Sans" font-size="9.8" fill="#3a3a3a" transform="translate(428.4,97.4) rotate(-45)">ab</text><path d="M429.4,100.4 L438.6,91.6" fill="none" stroke="#3a86b0" stroke-width="1.3"/><path d="M440.4,89.8 L435.2,91 L439.2,95 Z" fill="#3a86b0"/><path d="M445.8,93 L448.4,95.4 L451,93" fill="none" stroke="#333" stroke-width="1.3"/><path d="M349.3,117.8 H363.0 M349.3,121.7 H358.3 M349.3,125.6 H363.0 M349.3,129.6 H358.3" stroke="#4a4a4a" stroke-width="1.5"/><rect x="369.8" y="113.2" width="21.8" height="22.2" rx="4" fill="#e6e6e6" stroke="#8c8c8c" stroke-width="1"/><path d="M374,117.8 H387.5 M376.3,121.7 H385.2 M374,125.6 H387.5 M376.3,129.6 H385.2" stroke="#4a4a4a" stroke-width="1.5"/><path d="M398.2,117.8 H411.9 M402.8,121.7 H411.9 M398.2,125.6 H411.9 M402.8,129.6 H411.9" stroke="#4a4a4a" stroke-width="1.5"/><path d="M424.8,117.8 H439.0 M431.8,121.7 H439.0 M431.8,125.6 H439.0 M424.8,129.6 H439.0" stroke="#4a4a4a" stroke-width="1.5"/><path d="M430.6,123.6 H425.6 M427.8,121.4 L425.6,123.6 L427.8,125.8" fill="none" stroke="#2e86d4" stroke-width="1.4"/><path d="M449.3,117.8 H463.40000000000003 M456.3,121.7 H463.40000000000003 M456.3,125.6 H463.40000000000003 M449.3,129.6 H463.40000000000003" stroke="#4a4a4a" stroke-width="1.5"/><path d="M449.6,123.6 H454.8 M452.6,121.4 L454.8,123.6 L452.6,125.8" fill="none" stroke="#2e86d4" stroke-width="1.4"/><text x="485.6" y="93.8" font-family="Liberation Sans" font-size="9.8" fill="#3a3a3a" textLength="11.4" lengthAdjust="spacingAndGlyphs">ab</text><text x="485.8" y="100.6" font-family="Liberation Sans" font-size="9.8" fill="#3a3a3a">c</text><path d="M497.6,95 C498.6,98.2 496.4,99.8 492.2,99.8" fill="none" stroke="#3a8ec8" stroke-width="1.3"/><path d="M494.4,97.6 L492,99.8 L494.4,102" fill="none" stroke="#3a8ec8" stroke-width="1.2"/><rect x="483.6" y="118" width="14" height="12.6" fill="#dbe9f6" stroke="#5a7080" stroke-width="1.2"/><path d="M483.6,121.2 H497.6 M483.6,127.4 H497.6 M488.2,118 V121.2 M493,118 V121.2 M488.2,127.4 V130.6 M493,127.4 V130.6" stroke="#5a7080" stroke-width="1"/><path d="M486,124.3 H495.2 M487.8,122.6 L486,124.3 L487.8,126 M493.4,122.6 L495.2,124.3 L493.4,126" fill="none" stroke="#2e86d4" stroke-width="1.2"/><path d="M601,123.8 L603.5,126.2 L606,123.8" fill="none" stroke="#333" stroke-width="1.3"/><path d="M759.6,93 L762.3,95.6 L765,93" fill="none" stroke="#333" stroke-width="1.3"/><path d="M657.6,123.6 L660.3,126 L663,123.6" fill="none" stroke="#333" stroke-width="1.3"/><circle cx="706.2" cy="122.6" r="3.1" fill="#222"/><path d="M708.9,122 C709.8,126.4 707.4,129.4 703.4,130.4" fill="none" stroke="#222" stroke-width="1.7"/><path d="M719.2,113.4 V136" stroke="#e3e3e3" stroke-width="1"/><text x="734.3" y="123.3" font-family="Liberation Sans" font-size="8.8" fill="#444" textLength="4.6" lengthAdjust="spacingAndGlyphs">0</text><text x="727.2" y="131.2" font-family="Liberation Sans" font-size="8.8" fill="#444" textLength="12" lengthAdjust="spacingAndGlyphs">.00</text><path d="M733,121.2 H725.6 M728.2,118.8 L725.6,121.2 L728.2,123.6" fill="none" stroke="#2e7fa0" stroke-width="1.2"/><text x="751.8" y="123.3" font-family="Liberation Sans" font-size="8.8" fill="#444" textLength="12" lengthAdjust="spacingAndGlyphs">.00</text><text x="756.8" y="131.2" font-family="Liberation Sans" font-size="8.8" fill="#444" textLength="7" lengthAdjust="spacingAndGlyphs">.0</text><path d="M749.6,128 H757.2 M754.8,125.6 L757.2,128 L754.8,130.4" fill="none" stroke="#2e7fa0" stroke-width="1.2"/><rect x="810" y="83" width="13" height="6.9" fill="#f07c7c"/><rect x="810" y="89.9" width="8.5" height="6.6" fill="#5a9ee0"/><rect x="810" y="96.5" width="14.4" height="7.1" fill="#f07c7c"/><rect x="805.8" y="83" width="26" height="20.6" fill="none" stroke="#555" stroke-width="1.2"/><path d="M810,83 V103.6 M826.9,83 V103.6 M805.8,89.9 H810 M826.9,89.9 H831.8 M805.8,96.5 H810 M826.9,96.5 H831.8 M818.5,89.9 H826.9 M818.5,96.5 H826.9" stroke="#555" stroke-width="1"/><path d="M846.8,132.2 L848.8,134.4 L850.8,132.2" fill="none" stroke="#444" stroke-width="1.1"/><rect x="869.8" y="83" width="27" height="20.6" fill="#fff" stroke="#555" stroke-width="1.2"/><rect x="879" y="90" width="17.9" height="13.6" fill="#5aa0e6"/><path d="M879,83 V103.6 M887.6,83 V103.6 M869.8,89.9 H896.8 M869.8,96.5 H896.8" stroke="#555" stroke-width="1"/><path d="M897.6,90.2 L887.4,101.4" stroke="#5a5a5a" stroke-width="4.2" stroke-linecap="round"/><path d="M897.6,90.2 L887.4,101.4" stroke="#fff" stroke-width="2.2" stroke-linecap="round"/><path d="M886.4,100.6 C882.6,100.8 882.8,105 877.6,107.4 C883.6,108.6 889.6,106.8 889.4,103 Z" fill="#4b94dc" stroke="#3a7fc0" stroke-width="0.6"/><path d="M898.6,132.2 L900.5,134.4 L902.4,132.2" fill="none" stroke="#444" stroke-width="1.1"/><rect x="921.6" y="83" width="26.2" height="20.6" fill="#fff" stroke="#555" stroke-width="1.2"/><rect x="926.2" y="88" width="16.8" height="10.6" fill="#5aa0e6"/><path d="M926.2,83 V103.6 M943,83 V88 M943,98.6 V103.6 M921.6,88 H947.8 M921.6,98.6 H947.8" stroke="#555" stroke-width="1"/><path d="M948.6,90.2 L938.4,101.4" stroke="#5a5a5a" stroke-width="4.2" stroke-linecap="round"/><path d="M948.6,90.2 L938.4,101.4" stroke="#fff" stroke-width="2.2" stroke-linecap="round"/><path d="M937.4,100.6 C933.6,100.8 933.8,105 928.6,107.4 C934.6,108.6 940.6,106.8 940.4,103 Z" fill="#4b94dc" stroke="#3a7fc0" stroke-width="0.6"/><path d="M949.2,132.2 L951.1,134.4 L953,132.2" fill="none" stroke="#444" stroke-width="1.1"/><rect x="978" y="89.6" width="28" height="6.8" fill="#5aa0e6"/><rect x="978" y="83.2" width="28" height="19.6" fill="none" stroke="#555" stroke-width="1.2"/><path d="M987.3,83.2 V102.80000000000001 M996.7,83.2 V102.80000000000001 M978,89.7 H1006 M978,96.3 H1006" stroke="#555" stroke-width="1"/><path d="M991,91.4 H982.4 V88.2 L976.8,93.2 L982.4,98.2 V95 H991 Z" fill="#eef6fd" stroke="#5aa6e8" stroke-width="1.1"/><path d="M988.8,132.6 L991.3,134.8 L993.8,132.6" fill="none" stroke="#333" stroke-width="1.3"/><rect x="1020" y="89.6" width="16" height="6.8" fill="#5aa0e6"/><rect x="1020" y="83.2" width="27.4" height="19.6" fill="none" stroke="#555" stroke-width="1.2"/><path d="M1029.1,83.2 V102.80000000000001 M1038.3,83.2 V102.80000000000001 M1020,89.7 H1047.4 M1020,96.3 H1047.4" stroke="#555" stroke-width="1"/><rect x="1036" y="88" width="12" height="10" fill="#fff"/><path d="M1039.2,88.4 L1047.4,97.6 M1047.4,88.4 L1039.2,97.6" stroke="#e05050" stroke-width="1.2"/><path d="M1029.8,132.6 L1032.3,134.8 L1034.8,132.6" fill="none" stroke="#333" stroke-width="1.3"/><rect x="1069.8" y="89.6" width="9.2" height="6.8" fill="#5aa0e6"/><rect x="1060.8" y="83.2" width="27" height="19.6" fill="none" stroke="#555" stroke-width="1.2"/><path d="M1069.8,83.2 V102.80000000000001 M1078.8,83.2 V102.80000000000001 M1060.8,89.7 H1087.8 M1060.8,96.3 H1087.8" stroke="#555" stroke-width="1"/><path d="M1066.4,78.4 H1082.4 M1066.4,76.6 V80.2 M1082.4,76.6 V80.2" stroke="#3a7fc0" stroke-width="1.2"/><path d="M1071.4,131 L1073.9,133.2 L1076.4,131" fill="none" stroke="#333" stroke-width="1.3"/><path d="M1128,79.9 H1116.8 L1122.4,86 L1116.8,92 H1128.2" fill="none" stroke="#333" stroke-width="1.15"/><path d="M1141.8,85.6 L1144.4,88 L1147,85.6" fill="none" stroke="#333" stroke-width="1.3"/><rect x="1114.4" y="104.6" width="14.4" height="12.2" fill="#fff" stroke="#5a5a5a" stroke-width="1.2"/><path d="M1114.4,106.6 H1128.8" stroke="#777" stroke-width="0.9"/><path d="M1121.6,108.2 V115 M1118.8,112.2 L1121.6,115 L1124.4,112.2" fill="none" stroke="#3a90c8" stroke-width="1.3"/><path d="M1135.8,110.2 L1138.3,112.4 L1140.8,110.2" fill="none" stroke="#333" stroke-width="1.3"/><path d="M1114.5,136.9 L1118.6,132.9 L1123.8,137.8 L1119.5,142 Z" fill="#d77fe0"/><path d="M1123.7,128.2 L1128.8,132.8 L1119.5,142 L1114.5,136.9 Z" fill="none" stroke="#b040c0" stroke-width="1.2"/><path d="M1118.6,132.9 L1123.8,137.8" stroke="#b040c0" stroke-width="1"/><path d="M1135.8,134.2 L1138.3,136.4 L1140.8,134.2" fill="none" stroke="#333" stroke-width="1.3"/><path d="M1164.6,91.8 L1168.8,81 L1173,91.8 M1166.1,88.2 H1171.5" fill="none" stroke="#3a86c0" stroke-width="1.2"/><path d="M1165,94.7 H1172.6 L1165,105.1 H1173" fill="none" stroke="#333" stroke-width="1.2"/><path d="M1176.4,86.8 H1190.8 V88.6 L1185,94.6 V101 H1181 V94.6 L1176.4,88.6 Z" fill="none" stroke="#444" stroke-width="1.2"/><path d="M1189.8,132.4 L1192.0,134.6 L1194.2,132.4" fill="none" stroke="#333" stroke-width="1.2"/><circle cx="1225.8" cy="90" r="9.4" fill="none" stroke="#444" stroke-width="1.3"/><path d="M1219,96.8 L1208.6,107.2" stroke="#444" stroke-width="1.4"/><path d="M1237,132.4 L1239.25,134.6 L1241.5,132.4" fill="none" stroke="#333" stroke-width="1.2"/><rect x="1269.8" y="80.6" width="14" height="26.4" fill="none" stroke="#d97a50" stroke-width="1.4"/><path d="M1269.8,93.6 H1283.8 M1272.6,83.4 H1283.8 V91 H1272.6 Z M1272.6,96.4 H1283.8 V104.2 H1272.6 Z" fill="none" stroke="#e26060" stroke-width="1.1"/><path d="M89.6,185 L94.4,189.8 L99.2,185" fill="none" stroke="#333" stroke-width="1.15"/><circle cx="114.4" cy="182" r="1.1" fill="#333"/><circle cx="114.4" cy="186" r="1.1" fill="#333"/><circle cx="114.4" cy="190" r="1.1" fill="#333"/><path d="M131,181.2 L141.4,190.6 M141.4,181.2 L131,190.6" stroke="#8f8f8f" stroke-width="1.2"/><path d="M151.6,185.4 L156,190 L166.4,180.6" fill="none" stroke="#8f8f8f" stroke-width="1.2"/><path d="M194.4,185 L198.7,189.4 L203,185" fill="none" stroke="#777" stroke-width="1.1"/><path d="M11.5,255 L23.5,255 L23.5,244 Z" fill="#dadada"/></svg>
</body></html>
